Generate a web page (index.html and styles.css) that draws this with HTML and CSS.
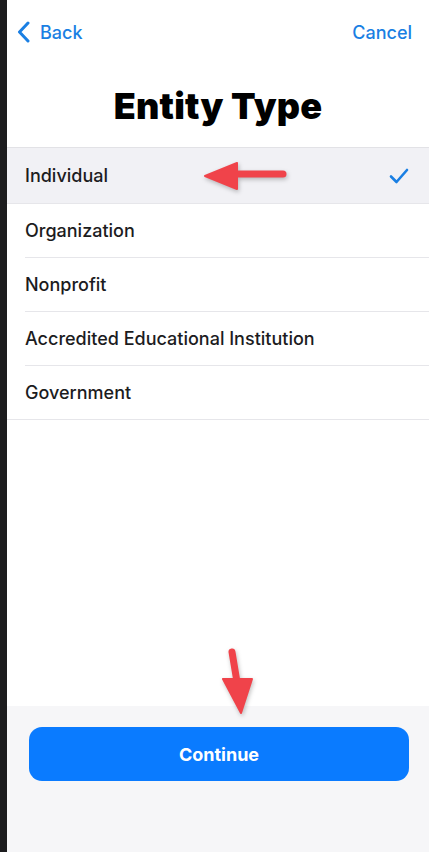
FILE: index.html
```html
<!DOCTYPE html>
<html lang="en">
<head>
    <meta charset="UTF-8">
    <meta name="viewport" content="width=device-width, initial-scale=1.0">
    <title>Entity Type</title>
    <link rel="stylesheet" href="styles.css">
</head>
<body>
    <div class="screen">
        <!-- 顶部导航 -->
        <div class="nav-bar">
            <a class="nav-link back-link">
                <svg class="chevron" width="13" height="22" viewBox="0 0 13 22">
                    <path d="M11 2 L2.5 11 L11 20" fill="none" stroke="#1a7fe3" stroke-width="3" stroke-linecap="round" stroke-linejoin="round"/>
                </svg>
                Back
            </a>
            <a class="nav-link">Cancel</a>
        </div>

        <h1>Entity Type</h1>

        <ul class="option-list">
            <li class="option selected">
                <span>Individual</span>
                <svg class="check" width="20" height="16" viewBox="0 0 20 16">
                    <path d="M2 8.5 L7.5 14 L18 2" fill="none" stroke="#1a7fe3" stroke-width="2.6" stroke-linecap="round" stroke-linejoin="round"/>
                </svg>
            </li>
            <li class="option"><span>Organization</span></li>
            <li class="option"><span>Nonprofit</span></li>
            <li class="option"><span>Accredited Educational Institution</span></li>
            <li class="option last"><span>Government</span></li>
        </ul>

        <div class="spacer"></div>

        <div class="footer">
            <button class="continue-button">Continue</button>
        </div>

        <!-- 标注箭头 -->
        <svg class="arrow arrow-left" width="90" height="40" viewBox="0 0 90 40">
            <path d="M30 17 L80 17" stroke="#f0434a" stroke-width="7" stroke-linecap="round"/>
            <path d="M2 19 L34 6 L34 32 Z" fill="#f0434a" stroke="#f0434a" stroke-width="2" stroke-linejoin="round"/>
        </svg>
        <svg class="arrow arrow-down" width="40" height="80" viewBox="0 0 40 80">
            <path d="M11 4 L17 40" stroke="#f0434a" stroke-width="7" stroke-linecap="round"/>
            <path d="M2 31 L31 31 L20 65 Z" fill="#f0434a" stroke="#f0434a" stroke-width="2" stroke-linejoin="round"/>
        </svg>
    </div>
</body>
</html>
```

FILE: styles.css
```css
body {
    margin: 0;
    background-color: #1c1c1e;
    font-family: Inter, "Liberation Sans", Arial, sans-serif;
}

.screen {
    position: relative;
    margin-left: 7px;
    height: 852px;
    background-color: #ffffff;
    display: flex;
    flex-direction: column;
    overflow: hidden;
}

.nav-bar {
    display: flex;
    justify-content: space-between;
    align-items: center;
    padding: 20px 17px 0 10px;
    height: 24px;
}

.nav-link {
    display: flex;
    align-items: center;
    gap: 10px;
    color: #1a7fe3;
    font-size: 18px;
    font-weight: 500;
}

h1 {
    margin: 40px 0 0;
    height: 63px;
    text-align: center;
    font-size: 36px;
    font-weight: 900;
    color: #000;
    letter-spacing: 0.2px;
}

.option-list {
    list-style: none;
    margin: 0;
    padding: 0;
    border-top: 1px solid #e2e2e6;
}

.option {
    display: flex;
    justify-content: space-between;
    align-items: center;
    height: 53px;
    margin-left: 18px;
    padding-right: 20px;
    border-bottom: 1px solid #e6e6ea;
    font-size: 18px;
    font-weight: 500;
    color: #1c1c1e;
}

.option.selected {
    height: 55px;
    margin-left: 0;
    padding-left: 18px;
    background-color: #f1f1f5;
}

.option.last {
    margin-left: 0;
    padding-left: 18px;
}

.spacer {
    flex: 1;
}

.footer {
    height: 146px;
    background-color: #f6f6f8;
    padding: 21px 20px 0 22px;
    box-sizing: border-box;
}

.continue-button {
    width: 100%;
    height: 54px;
    border: none;
    border-radius: 13px;
    background-color: #0a7bff;
    color: #fff;
    font-family: inherit;
    font-size: 18px;
    font-weight: 700;
}

.arrow {
    position: absolute;
    filter: drop-shadow(1px 2px 2px rgba(0, 0, 0, 0.25));
}

.arrow-left {
    left: 196px;
    top: 157px;
}

.arrow-down {
    left: 214px;
    top: 648px;
}
```
